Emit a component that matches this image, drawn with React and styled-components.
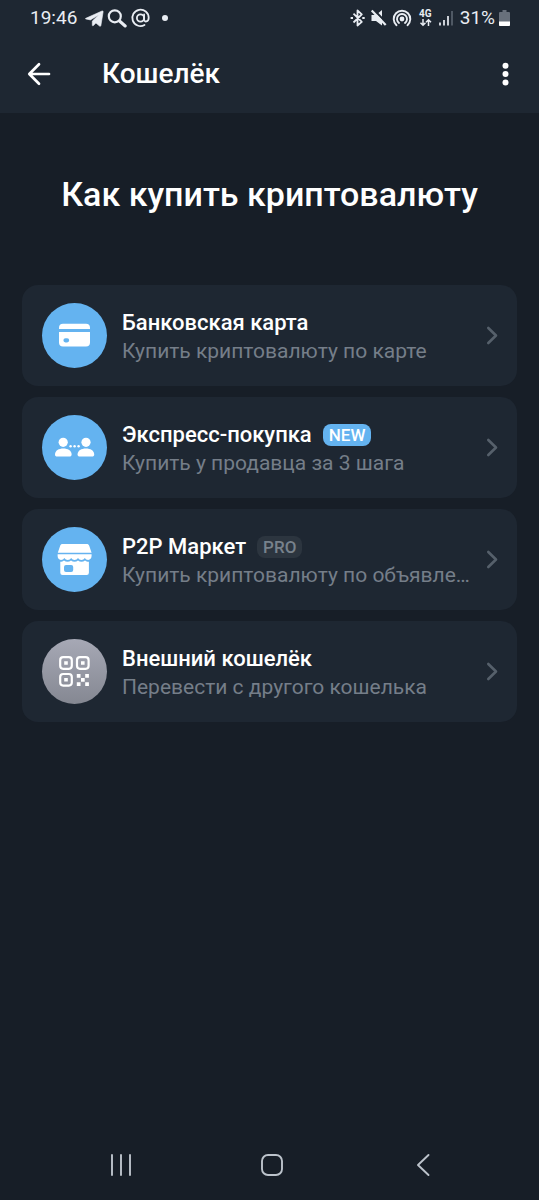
import React from 'react';
import styled, { createGlobalStyle } from 'styled-components';

const GlobalStyle = createGlobalStyle`
  * {
    box-sizing: border-box;
  }
  body {
    margin: 0;
    background: #171e27;
    color: #fff;
    font-family: Roboto, "Noto Sans", sans-serif;
  }
  button {
    padding: 0;
    border: 0;
    background: none;
    color: inherit;
    font: inherit;
    cursor: pointer;
  }
  svg {
    display: block;
    flex-shrink: 0;
  }
`;

const Page = styled.div`
  display: flex;
  flex-direction: column;
  min-height: 100vh;
`;

const Header = styled.header`
  background: #1e2732;
`;

const StatusBar = styled.div`
  display: flex;
  justify-content: space-between;
  align-items: center;
  height: 35px;
  padding: 0 29px 0 30px;
  color: #e9edf3;
  font-size: 19px;
  line-height: 24px;
`;

const StatusGroup = styled.div`
  display: flex;
  align-items: center;
  gap: ${({ $gap }) => $gap}px;
`;

const AppBar = styled.div`
  display: flex;
  align-items: center;
  height: 78px;
  padding: 0 29px 0 24px;
`;

const IconButton = styled.button`
  display: flex;
  justify-content: center;
  align-items: center;
  width: ${({ $width }) => $width}px;
  height: 48px;
`;

const AppTitle = styled.div`
  flex: 1;
  margin-left: 48px;
  font-size: 28px;
  font-weight: 500;
  line-height: 36px;
`;

const Main = styled.main`
  flex: 1;
  padding: 59px 22px 40px;
`;

const Heading = styled.h1`
  margin: 0 0 69px;
  font-size: 34px;
  font-weight: 500;
  line-height: 44px;
  text-align: center;
`;

const List = styled.ul`
  display: flex;
  flex-direction: column;
  gap: 11px;
  margin: 0;
  padding: 0;
  list-style: none;
`;

const Option = styled.button`
  display: flex;
  align-items: center;
  width: 100%;
  padding: 18px 18px 18px 20px;
  border-radius: 16px;
  background: #1e2732;
  text-align: left;
`;

const Circle = styled.span`
  flex-shrink: 0;
  width: 65px;
  height: 65px;
  border-radius: 50%;
  background: ${({ $muted }) =>
    $muted ? 'linear-gradient(#a6a8b5, #858892)' : '#64b3f0'};
`;

const OptionText = styled.span`
  flex: 1;
  min-width: 0;
  margin: 0 12px 0 15px;
  padding-top: 3px;
`;

const OptionTitle = styled.span`
  display: flex;
  align-items: center;
  gap: 11px;
  font-size: 22px;
  font-weight: 500;
  line-height: 29px;
`;

const OptionNote = styled.span`
  display: block;
  overflow: hidden;
  color: #757e89;
  font-size: 21px;
  line-height: 29px;
  text-overflow: ellipsis;
  white-space: nowrap;
`;

const Badge = styled.span`
  padding: 0 6px;
  border-radius: 8px;
  background: ${({ $pro }) => ($pro ? '#2c353f' : '#64b3f0')};
  color: ${({ $pro }) => ($pro ? '#78828c' : '#fff')};
  font-size: 17px;
  font-weight: 500;
  line-height: 22px;
`;

const NavBar = styled.nav`
  display: grid;
  grid-template-columns: repeat(3, 1fr);
  justify-items: center;
  padding: 0 41px 11px 45px;
`;

const CardIcon = () => (
  <svg width="65" height="65" viewBox="0 0 65 65" fill="#fff" aria-hidden="true">
    <path d="M17 26v-1.200a4 4 0 0 1 4-4h23a4 4 0 0 1 4 4V26z" />
    <path fillRule="evenodd" d="M17 29h31v10.500a4 4 0 0 1-4 4H21a4 4 0 0 1-4-4zM23.500 35.200a2.100 2.100 0 0 0 0 4.200h1.600a2.100 2.100 0 0 0 0-4.200z" />
  </svg>
);

const PeopleIcon = () => (
  <svg width="65" height="65" viewBox="0 0 65 65" fill="#fff" aria-hidden="true">
    <circle cx="21.200" cy="27.300" r="4.600" />
    <circle cx="44" cy="27.300" r="4.600" />
    <path d="M13 39.400c0-4 3.800-6 8.300-6s8.300 2 8.300 6c0 1.400-.8 2-2.200 2H15.200c-1.400 0-2.200-.6-2.200-2z" />
    <path d="M35.600 39.400c0-4 3.800-6 8.300-6s8.300 2 8.300 6c0 1.400-.8 2-2.200 2H37.800c-1.400 0-2.200-.6-2.200-2z" />
    <circle cx="28.600" cy="31.300" r="1.200" />
    <circle cx="32.600" cy="31.300" r="1.200" />
    <circle cx="36.600" cy="31.300" r="1.200" />
  </svg>
);

const StoreIcon = () => (
  <svg width="65" height="65" viewBox="0 0 65 65" fill="#fff" aria-hidden="true">
    <path d="M20.600 17h24c1.400 0 2.200.6 2.700 1.900l2.300 6.800H15.800l2.300-6.800c.5-1.300 1.200-1.900 2.500-1.900z" />
    <path d="M15.600 27.300h34v1.500c0 2.300-1.500 4.200-3.400 4.200-1.500 0-2.600-.8-3.400-2-.8 1.200-2 2-3.400 2s-2.600-.8-3.400-2c-.8 1.200-2 2-3.400 2s-2.600-.8-3.400-2c-.8 1.200-2 2-3.400 2s-2.600-.8-3.400-2c-.8 1.200-2 2-3.400 2-2 0-3.400-1.900-3.400-4.200z" />
    <path fillRule="evenodd" d="M18.300 34.800c1.600 0 2.700-.4 3.700-1.300 2 1.600 5 1.600 7 0 2 1.600 5 1.600 7 0 2 1.600 5 1.600 7 0 1 .9 2.300 1.300 3.900 1.300v11a2.200 2.200 0 0 1-2.200 2.200H20.500a2.200 2.200 0 0 1-2.200-2.200zM24 38a2 2 0 0 0-2 2v3a2 2 0 0 0 2 2h5.200a2 2 0 0 0 2-2v-3a2 2 0 0 0-2-2z" />
  </svg>
);

const QrIcon = () => (
  <svg width="65" height="65" viewBox="0 0 65 65" fill="#fff" aria-hidden="true">
    <g fill="none" stroke="#fff" strokeWidth="2.200">
      <rect x="18.200" y="18.200" width="11.600" height="11.600" rx="3" />
      <rect x="35" y="18.200" width="11.600" height="11.600" rx="3" />
      <rect x="18.200" y="35" width="11.600" height="11.600" rx="3" />
    </g>
    <path d="M22.200 22.200h3.600v3.600h-3.600zM39 22.200h3.600v3.600H39zM22.200 39h3.600v3.600h-3.600z" />
    <path d="M34.800 35h3.700v3.700h-3.700zM43.200 35h3.700v3.700h-3.700zM39 39.100h3.700v3.700H39zM34.800 43.300h3.700V47h-3.700zM43.200 43.300h3.700V47h-3.700z" />
  </svg>
);

const Chevron = () => (
  <svg width="14" height="20" viewBox="0 0 14 20" fill="none" stroke="#56606b" strokeWidth="2.600" aria-hidden="true">
    <path d="M3.300 2 11 9.500 3.300 17" strokeLinecap="round" strokeLinejoin="round" />
  </svg>
);

const options = [
  { title: 'Банковская карта', note: 'Купить криптовалюту по карте', icon: <CardIcon /> },
  { title: 'Экспресс-покупка', note: 'Купить у продавца за 3 шага', icon: <PeopleIcon />, badge: 'NEW' },
  { title: 'P2P Маркет', note: 'Купить криптовалюту по объявлениям', icon: <StoreIcon />, badge: 'PRO' },
  { title: 'Внешний кошелёк', note: 'Перевести с другого кошелька', icon: <QrIcon />, muted: true },
];

const Status = () => (
  <StatusBar>
    <StatusGroup $gap={8}>
      <span>19:46</span>
      <svg width="66" height="20" viewBox="0 0 66 20" fill="none" aria-hidden="true">
        <path d="M.8 10.300 17 3c.8-.3 1.200.1 1.100.9l-2.200 13.600c-.1.800-.7 1-1.300.6L10.900 15l-2.500 2.600c-.6.500-1.100.3-1.100-.5v-4l6.300-6.100-8.200 4.900-4.500-.9c-.7-.1-.7-.5-.1-.7z" fill="#e9edf3" stroke="#e9edf3" strokeWidth=".6" />
        <circle cx="29.800" cy="8.300" r="6" stroke="#e9edf3" strokeWidth="2.200" />
        <path d="m34.500 13 5.700 5" stroke="#e9edf3" strokeWidth="3" strokeLinecap="round" />
        <g stroke="#e9edf3" strokeWidth="1.800" strokeLinecap="round">
          <circle cx="55.500" cy="10" r="3.600" />
          <path d="M59.100 6.500v5c0 3 4.600 2.700 4.600-1.700A8.200 8.200 0 1 0 59.500 17" />
        </g>
      </svg>
      <svg width="20" height="20" viewBox="0 0 20 20" aria-hidden="true">
        <circle cx="6" cy="10" r="3" fill="#e9edf3" />
      </svg>
    </StatusGroup>
    <StatusGroup $gap={4}>
      <svg width="106" height="20" viewBox="0 0 106 20" fill="none" stroke="#e9edf3" aria-hidden="true">
        <path d="m3.500 5.700 8.300 8.200L7.500 17.500v-15l4.300 3.800-8.300 8.200" strokeWidth="1.800" strokeLinejoin="round" />
        <path d="M.6 10h2.400M12.300 10h2.400" strokeWidth="2" />
        <path d="M21.500 7H26l6-5v15.500l-6-4.500h-4.500z" fill="#e9edf3" stroke="none" />
        <path d="m23.300 1.200 14 14.500" stroke="#1e2732" strokeWidth="2.200" />
        <path d="m21.700 2.500 14 14.500" strokeWidth="2.200" />
        <circle cx="52" cy="11" r="2.400" fill="#e9edf3" stroke="none" />
        <path d="M49 15a5 5 0 1 1 6 0M46.500 17.200a8.300 8.300 0 1 1 11 0" strokeWidth="1.900" strokeLinecap="round" />
        <text x="69" y="9" fill="#e9edf3" stroke="none" fontSize="10" fontWeight="700">4G</text>
        <path d="M73 11v6m-2.500-2.300L73 17.200l2.500-2.500M78.500 18v-6M76 14.300l2.500-2.500 2.500 2.500" strokeWidth="1.500" />
        <path d="M90 14.500v3M94 12v5.500M98 8v9.500" strokeWidth="1.700" />
        <path d="M102 3v14.500" stroke="#59626e" strokeWidth="1.700" />
      </svg>
      <span>31%</span>
      <svg width="11" height="20" viewBox="0 0 11 20" aria-hidden="true">
        <path d="M3.500 2h4v2H10a1 1 0 0 1 1 1v12a1 1 0 0 1-1 1H1a1 1 0 0 1-1-1V5a1 1 0 0 1 1-1h2.500z" fill="#68707b" />
        <path d="M0 13.500h11V17a1 1 0 0 1-1 1H1a1 1 0 0 1-1-1z" fill="#fff" />
      </svg>
    </StatusGroup>
  </StatusBar>
);

export default function App() {
  return (
    <Page>
      <GlobalStyle />
      <Header>
        <Status />
        <AppBar>
          <IconButton $width={30} aria-label="Назад">
            <svg width="24" height="24" viewBox="0 0 24 24" fill="none" stroke="#fff" strokeWidth="2.700" strokeLinecap="round" strokeLinejoin="round">
              <path d="M22 12H2.500M12 2.300 2.300 12l9.700 9.700" />
            </svg>
          </IconButton>
          <AppTitle>Кошелёк</AppTitle>
          <IconButton $width={10} aria-label="Меню">
            <svg width="8" height="26" viewBox="0 0 8 26" fill="#fff">
              <circle cx="4.500" cy="4.700" r="3" />
              <circle cx="4.500" cy="13" r="3" />
              <circle cx="4.500" cy="21.500" r="3" />
            </svg>
          </IconButton>
        </AppBar>
      </Header>
      <Main>
        <Heading>Как купить криптовалюту</Heading>
        <List>
          {options.map(({ title, note, icon, badge, muted }) => (
            <li key={title}>
              <Option>
                <Circle $muted={muted}>{icon}</Circle>
                <OptionText>
                  <OptionTitle>
                    {title}
                    {badge && <Badge $pro={badge === 'PRO'}>{badge}</Badge>}
                  </OptionTitle>
                  <OptionNote>{note}</OptionNote>
                </OptionText>
                <Chevron />
              </Option>
            </li>
          ))}
        </List>
      </Main>
      <NavBar>
        <IconButton $width={48} aria-label="Недавние">
          <svg width="24" height="24" viewBox="0 0 24 24" stroke="#bcc3cb" strokeWidth="1.900" strokeLinecap="round">
            <path d="M3 2v20M12 2v20M21 2v20" />
          </svg>
        </IconButton>
        <IconButton $width={48} aria-label="Домой">
          <svg width="24" height="24" viewBox="0 0 24 24" fill="none" stroke="#bcc3cb" strokeWidth="1.900">
            <rect x="2" y="2" width="20" height="20" rx="6" />
          </svg>
        </IconButton>
        <IconButton $width={48} aria-label="Назад">
          <svg width="24" height="24" viewBox="0 0 24 24" fill="none" stroke="#bcc3cb" strokeWidth="1.900" strokeLinecap="round" strokeLinejoin="round">
            <path d="M17.500 2 7 12l10.500 10" />
          </svg>
        </IconButton>
      </NavBar>
    </Page>
  );
}
